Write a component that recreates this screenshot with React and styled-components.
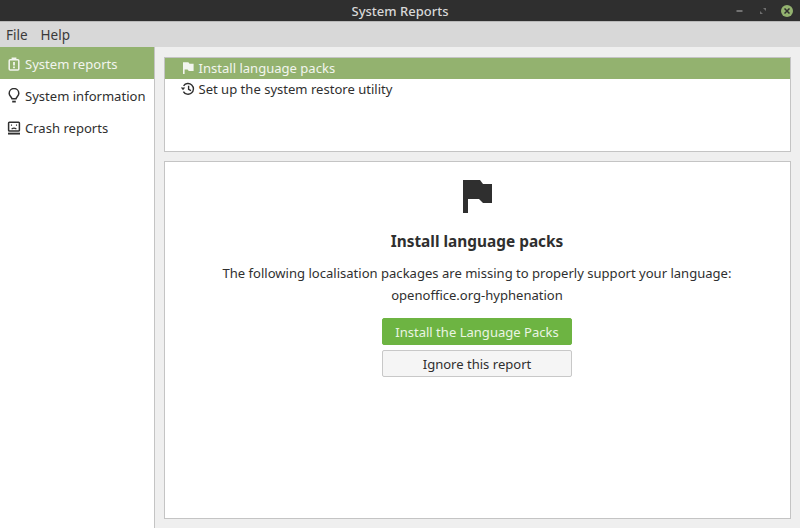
import styled, { createGlobalStyle } from "styled-components";

const GlobalStyle = createGlobalStyle`
  html, body {
    margin: 0;
    padding: 0;
    background: #efefef;
  }
`;

const sidebarItems = [
  { label: "System reports", icon: "report", selected: true },
  { label: "System information", icon: "bulb" },
  { label: "Crash reports", icon: "crash" },
];

const reports = [
  { label: "Install language packs", icon: "flag", selected: true },
  { label: "Set up the system restore utility", icon: "history" },
];

const Icon = ({ name }) => {
  if (name === "report") {
    return (
      <svg width="14" height="14" viewBox="0 0 14 14" fill="none" stroke="currentColor" strokeWidth="1.5">
        <rect x="2.2" y="2.7" width="9.6" height="10.3" rx="1" />
        <path d="M4.6 1.6h4.8" strokeWidth="2.2" />
        <path d="M7 5v3.6M7 9.6v1.6" strokeWidth="1.8" />
      </svg>
    );
  }
  if (name === "bulb") {
    return (
      <svg width="14" height="15" viewBox="0 0 14 15" fill="none" stroke="currentColor" strokeWidth="1.5">
        <path d="M5 10.8C4.6 9 2.2 8 2.2 5.4a4.8 4.8 0 0 1 9.6 0c0 2.6-2.4 3.6-2.8 5.4z" />
        <path d="M5.2 13.6h3.6" strokeWidth="1.8" />
      </svg>
    );
  }
  if (name === "crash") {
    return (
      <svg width="14" height="14" viewBox="0 0 14 14" fill="none" stroke="currentColor">
        <rect x="1.6" y="1.2" width="10.8" height="8.8" rx="0.8" strokeWidth="1.5" />
        <path d="M1 12.6h12" strokeWidth="1.9" />
        <path d="M4.5 3.6v1.2M9.5 3.6v1.2M4.6 8c1.4-1 3.4-1 4.8 0" strokeWidth="1.1" />
      </svg>
    );
  }
  if (name === "history") {
    return (
      <svg width="14" height="14" viewBox="0 0 14 14" fill="none" stroke="currentColor" strokeWidth="1.4">
        <path d="M2.6 3.8A5.4 5.4 0 1 1 2.4 9.6" />
        <path d="M-0.2 5.6h4.4L2 8.2z" fill="currentColor" stroke="none" />
        <path d="M7.6 3.8v3.6l2.4 1.3" />
      </svg>
    );
  }
  return (
    <svg width="14" height="14" viewBox="0 0 14 14" fill="currentColor">
      <path d="M2 1.2h5.4l1.1 1.5h4.1v7.4H7.8L6.6 8.6H3.6V13H2z" />
    </svg>
  );
};

const Window = styled.div`
  width: 800px;
  height: 528px;
  display: flex;
  flex-direction: column;
  overflow: hidden;
  background: #efefef;
  color: #2f2f2f;
  font-family: "Noto Sans", sans-serif;
  font-size: 13.05px;
`;

const TitleBar = styled.div`
  height: 21px;
  flex-shrink: 0;
  background: #2f2f2f;
  display: flex;
  align-items: center;
  justify-content: center;
  position: relative;
  border-bottom: 1px solid #b9b9b9;
`;

const Title = styled.div`
  color: #d8d8d8;
  font-weight: 500;
  font-size: 13px;
`;

const WindowButtons = styled.div`
  position: absolute;
  right: 7px;
  top: 0;
  height: 21px;
  display: flex;
  align-items: center;
  gap: 15px;
`;

const MinimizeGlyph = styled.svg`
  margin-right: 2px;
`;

const CloseDot = styled.div`
  width: 12px;
  height: 12px;
  border-radius: 50%;
  background: #93b26f;
  display: flex;
  align-items: center;
  justify-content: center;
`;

const MenuBar = styled.div`
  height: 25px;
  flex-shrink: 0;
  background: #d8d8d8;
  display: flex;
  align-items: center;
  gap: 13px;
  padding-left: 6px;
  font-size: 13.5px;
`;

const MenuItem = styled.div`
  color: #3a3a3a;
`;

const Body = styled.div`
  flex: 1;
  display: flex;
  min-height: 0;
`;

const Sidebar = styled.div`
  width: 154px;
  flex-shrink: 0;
  background: #ffffff;
  border-right: 1px solid #c4c4c4;
`;

const SidebarRow = styled.div`
  height: 32px;
  box-sizing: border-box;
  padding: 1px 0 0 7px;
  display: flex;
  align-items: center;
  gap: 4px;
  background: ${(props) => (props.$selected ? "#93b26f" : "transparent")};
  color: ${(props) => (props.$selected ? "#f2f5ee" : "#2f2f2f")};
`;

const Main = styled.div`
  flex: 1;
  display: flex;
  flex-direction: column;
  gap: 9px;
  padding: 10px 9px 9px 9px;
  min-width: 0;
`;

const ReportList = styled.div`
  height: 93px;
  flex-shrink: 0;
  background: #ffffff;
  border: 1px solid #c4c4c4;
`;

const ReportRow = styled.div`
  height: 21px;
  box-sizing: border-box;
  padding: 0 0 1px 15.5px;
  display: flex;
  align-items: center;
  gap: 4px;
  background: ${(props) => (props.$selected ? "#93b26f" : "transparent")};
  color: ${(props) => (props.$selected ? "#f2f5ee" : "#2f2f2f")};
`;

const DetailPanel = styled.div`
  flex: 1;
  background: #ffffff;
  border: 1px solid #c4c4c4;
  display: flex;
  flex-direction: column;
  align-items: center;
  padding: 18px 1px 0 0;
`;

const BigFlag = styled.svg`
  display: block;
  margin-bottom: 19px;
`;

const Heading = styled.div`
  font-weight: 700;
  font-size: 15.4px;
  line-height: 20px;
  margin-bottom: 11px;
`;

const Message = styled.div`
  line-height: 21.5px;
  text-align: center;
  margin-bottom: 12px;
`;

const ActionButton = styled.button`
  width: 190px;
  height: 27px;
  box-sizing: border-box;
  margin-bottom: 5px;
  padding: 0;
  border-radius: 2px;
  font: inherit;
  border: 1px solid ${(props) => (props.$primary ? "#6db442" : "#c8c8c8")};
  background: ${(props) => (props.$primary ? "#6db442" : "#f5f5f5")};
  color: ${(props) => (props.$primary ? "#eaf5e2" : "#2f2f2f")};
`;

const App = () => {
  return (
    <Window>
      <GlobalStyle />
      <TitleBar>
        <Title>System Reports</Title>
        <WindowButtons>
          <MinimizeGlyph width="7" height="4" viewBox="0 0 7 4">
            <path d="M0.5 2h6" stroke="#8a8a8a" strokeWidth="1.5" />
          </MinimizeGlyph>
          <svg width="6" height="6" viewBox="0 0 6 6" fill="#6f6f6f">
            <path d="M3 0h3v3zM0 3l3 3H0z" />
          </svg>
          <CloseDot>
            <svg width="6" height="6" viewBox="0 0 6 6">
              <path d="M0.5 0.5l5 5M5.5 0.5l-5 5" stroke="#2f2f2f" strokeWidth="1.5" />
            </svg>
          </CloseDot>
        </WindowButtons>
      </TitleBar>
      <MenuBar>
        <MenuItem>File</MenuItem>
        <MenuItem>Help</MenuItem>
      </MenuBar>
      <Body>
        <Sidebar>
          {sidebarItems.map((item) => (
            <SidebarRow key={item.label} $selected={item.selected}>
              <Icon name={item.icon} />
              {item.label}
            </SidebarRow>
          ))}
        </Sidebar>
        <Main>
          <ReportList>
            {reports.map((report) => (
              <ReportRow key={report.label} $selected={report.selected}>
                <Icon name={report.icon} />
                {report.label}
              </ReportRow>
            ))}
          </ReportList>
          <DetailPanel>
            <BigFlag width="29" height="33" viewBox="0 0 29 33" fill="#2f2f2f">
              <path d="M0 0h17l3 4h9v19H20l-4-4H5v14H0z" />
            </BigFlag>
            <Heading>Install language packs</Heading>
            <Message>
              The following localisation packages are missing to properly support your language:
              <br />
              openoffice.org-hyphenation
            </Message>
            <ActionButton $primary>Install the Language Packs</ActionButton>
            <ActionButton>Ignore this report</ActionButton>
          </DetailPanel>
        </Main>
      </Body>
    </Window>
  );
};

export default App;
